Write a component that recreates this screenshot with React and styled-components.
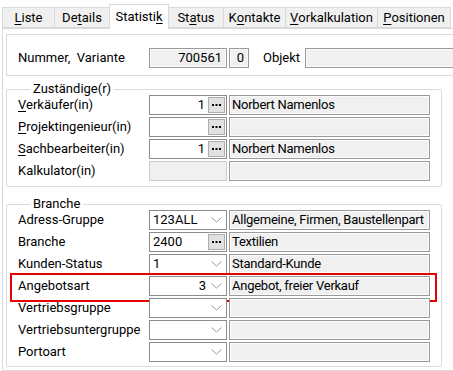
import React from 'react';
import styled, { createGlobalStyle } from 'styled-components';

const GlobalStyle = createGlobalStyle`
  html, body {
    margin: 0;
    padding: 0;
    background: #ffffff;
  }
  body {
    font-family: Roboto, "Liberation Sans", Arial, sans-serif;
    font-size: 13px;
    color: #000000;
  }
`;

const tabs = [
  { text: 'Liste', u: 0, width: 53 },
  { text: 'Details', u: 2, width: 56 },
  { text: 'Statistik', u: 8, width: 60, active: true },
  { text: 'Status', u: 2, width: 56 },
  { text: 'Kontakte', u: 1, width: 63 },
  { text: 'Vorkalkulation', u: 0, width: 93 },
  { text: 'Positionen', u: 0, width: 74 },
];

const zustaendige = [
  { text: 'Verkäufer(in)', u: 0, code: '1', align: 'right', kind: 'button', name: 'Norbert Namenlos' },
  { text: 'Projektingenieur(in)', u: 0, code: '', align: 'right', kind: 'button', name: '' },
  { text: 'Sachbearbeiter(in)', u: 0, code: '1', align: 'right', kind: 'button', name: 'Norbert Namenlos' },
  { text: 'Kalkulator(in)', code: '', kind: 'disabled', name: '' },
];

const branche = [
  { text: 'Adress-Gruppe', code: '123ALL', align: 'left', kind: 'combo', name: 'Allgemeine, Firmen, Baustellenpart' },
  { text: 'Branche', code: '2400', align: 'left', kind: 'button', name: 'Textilien' },
  { text: 'Kunden-Status', code: '1', align: 'left', kind: 'combo', name: 'Standard-Kunde' },
  { text: 'Angebotsart', code: '3', align: 'right', kind: 'combo', name: 'Angebot, freier Verkauf', highlight: true },
  { text: 'Vertriebsgruppe', code: '', kind: 'combo', name: '' },
  { text: 'Vertriebsuntergruppe', code: '', kind: 'combo', name: '' },
  { text: 'Portoart', code: '', kind: 'combo', name: '' },
];

function Accel({ text, u }) {
  if (u === undefined) return text;
  return (
    <>
      {text.slice(0, u)}
      <u>{text[u]}</u>
      {text.slice(u + 1)}
    </>
  );
}

function Chevron() {
  return (
    <svg width="11" height="6" viewBox="0 0 11 6">
      <polyline points="0.5,0.5 5.5,5 10.5,0.5" fill="none" stroke="#9a9a9a" strokeWidth="1" />
    </svg>
  );
}

function Dots() {
  return (
    <DotButton>
      <svg width="9" height="3" viewBox="0 0 9 3">
        <rect x="0" y="0" width="2" height="2" fill="#000" />
        <rect x="3.5" y="0" width="2" height="2" fill="#000" />
        <rect x="7" y="0" width="2" height="2" fill="#000" />
      </svg>
    </DotButton>
  );
}

function FieldRow({ row }) {
  return (
    <Row $highlight={row.highlight}>
      <Label>
        <Accel text={row.text} u={row.u} />
      </Label>
      <CodeBox $disabled={row.kind === 'disabled'}>
        <CodeValue $align={row.align}>{row.code}</CodeValue>
        {row.kind === 'button' && <Dots />}
        {row.kind === 'combo' && (
          <ChevronSlot>
            <Chevron />
          </ChevronSlot>
        )}
      </CodeBox>
      <NameBox>{row.name}</NameBox>
    </Row>
  );
}

export default function App() {
  return (
    <>
      <GlobalStyle />
      <Window>
        <TabBar>
          {tabs.map(tab => (
            <Tab key={tab.text} $active={tab.active} $width={tab.width}>
              <Accel text={tab.text} u={tab.u} />
            </Tab>
          ))}
        </TabBar>
        <Panel>
          <HeaderBox>
            <HeaderRow>
              <HeaderLabel>Nummer,&nbsp; Variante</HeaderLabel>
              <ReadBox $width={78} $align="right">700561</ReadBox>
              <ReadBox $width={20} $align="right">0</ReadBox>
              <ObjektLabel>Objekt</ObjektLabel>
              <ReadBox $width={170} $align="left" />
            </HeaderRow>
          </HeaderBox>

          <Group>
            <Legend>Zuständige(r)</Legend>
            {zustaendige.map(row => (
              <FieldRow key={row.text} row={row} />
            ))}
          </Group>

          <Group $spaced>
            <Legend>Branche</Legend>
            {branche.map(row => (
              <FieldRow key={row.text} row={row} />
            ))}
          </Group>
        </Panel>
      </Window>
    </>
  );
}

const Window = styled.div`
  width: 453px;
  height: 371px;
  overflow: hidden;
  background: #ffffff;
`;

const TabBar = styled.div`
  display: flex;
  align-items: flex-end;
  height: 28px;
  padding-left: 2px;
  position: relative;
  z-index: 1;
`;

const Tab = styled.div`
  flex: none;
  display: flex;
  align-items: center;
  justify-content: center;
  box-sizing: border-box;
  width: ${({ $width }) => $width}px;
  height: ${({ $active }) => ($active ? 25 : 21)}px;
  margin-left: -1px;
  margin-bottom: ${({ $active }) => ($active ? -1 : 0)}px;
  padding-top: ${({ $active }) => ($active ? 0 : 1)}px;
  border: 1px solid #d9d9d9;
  border-bottom: ${({ $active }) => ($active ? 'none' : '1px solid #d9d9d9')};
  background: ${({ $active }) => ($active ? '#ffffff' : '#f0f0f0')};
  white-space: nowrap;
  line-height: 16px;

  &:first-child {
    margin-left: 0;
  }

  u {
    text-underline-offset: 2px;
  }
`;

const Panel = styled.div`
  box-sizing: border-box;
  height: 343px;
  margin-left: 2px;
  padding: 5px 0 2px 3px;
  border: 1px solid #d9d9d9;
  border-right: none;
`;

const HeaderBox = styled.div`
  box-sizing: border-box;
  height: 42px;
  padding: 13px 0 0 11px;
  border: 1px solid #d9d9d9;
  border-right: none;
  background: #ffffff;
  overflow: hidden;
`;

const HeaderRow = styled.div`
  display: flex;
  align-items: center;
  height: 20px;
  column-gap: 2px;
`;

const HeaderLabel = styled.span`
  flex: none;
  width: 129px;
  white-space: nowrap;
  line-height: 20px;
`;

const ObjektLabel = styled.span`
  flex: none;
  margin: 0 3px 0 12px;
  line-height: 20px;
`;

const ReadBox = styled.div`
  flex: none;
  box-sizing: border-box;
  width: ${({ $width }) => $width}px;
  height: 20px;
  padding: 0 4px;
  border: 1px solid #9a9a9a;
  box-shadow: inset 0 0 0 1px #fbfbfb;
  background: #f0f0f0;
  text-align: ${({ $align }) => $align};
  line-height: 18px;
`;

const Group = styled.fieldset`
  box-sizing: border-box;
  width: 436px;
  margin: ${({ $spaced }) => ($spaced ? '11px' : '7px')} 0 0;
  padding: 0 0 ${({ $spaced }) => ($spaced ? 4 : 5)}px 11px;
  border: 1px solid #dcdcdc;
  border-radius: 2px;
  display: flex;
  flex-direction: column;
  row-gap: 2px;
`;

const Legend = styled.legend`
  margin-left: 12px;
  padding: 0 3px;
  line-height: 12px;
  height: 12px;
`;

const Row = styled.div`
  position: relative;
  align-self: flex-start;
  display: grid;
  grid-template-columns: 129px 78px 201px;
  column-gap: 2px;
  height: 20px;
  align-items: center;

  &::after {
    content: '';
    display: ${({ $highlight }) => ($highlight ? 'block' : 'none')};
    position: absolute;
    top: -3px;
    bottom: -6px;
    left: -8px;
    right: -7px;
    border: 2px solid #e60000;
    pointer-events: none;
  }
`;

const Label = styled.span`
  white-space: nowrap;
  line-height: 20px;

  u {
    text-underline-offset: 2px;
  }
`;

const CodeBox = styled.div`
  box-sizing: border-box;
  height: 20px;
  display: flex;
  align-items: center;
  padding: 0 1px 0 3px;
  border: 1px solid ${({ $disabled }) => ($disabled ? '#cccccc' : '#8c8c8c')};
  background: ${({ $disabled }) => ($disabled ? '#f0f0f0' : '#ffffff')};
`;

const CodeValue = styled.span`
  flex: 1;
  text-align: ${({ $align }) => $align || 'left'};
  padding-right: 3px;
  line-height: 18px;
  white-space: nowrap;
`;

const DotButton = styled.span`
  box-sizing: border-box;
  width: 17px;
  height: 16px;
  display: flex;
  align-items: center;
  justify-content: center;
  background: #e1e1e1;
  border: 1px solid #adadad;
  padding-top: 1px;
`;

const ChevronSlot = styled.span`
  width: 14px;
  display: flex;
  align-items: center;
  justify-content: center;
  padding-right: 2px;
`;

const NameBox = styled.div`
  box-sizing: border-box;
  height: 20px;
  padding: 0 1px 0 2px;
  border: 1px solid #9a9a9a;
  box-shadow: inset 0 0 0 1px #fbfbfb;
  background: #f0f0f0;
  line-height: 18px;
  letter-spacing: -0.25px;
  white-space: nowrap;
  overflow: hidden;
`;
